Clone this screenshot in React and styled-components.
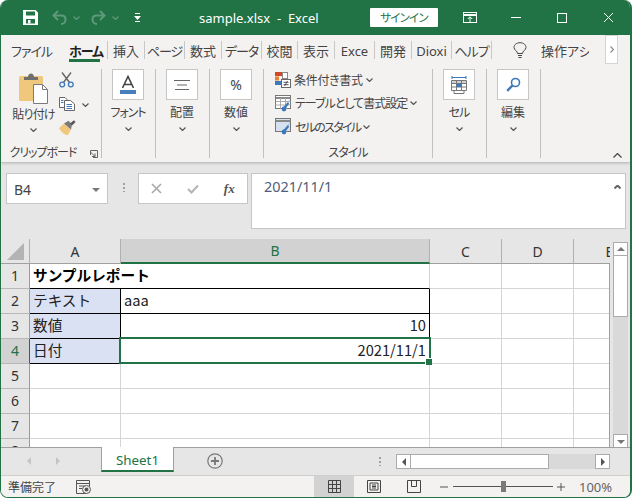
import React from "react";
import styled, { createGlobalStyle } from "styled-components";

const UI_FONT = `"Noto Sans", "Noto Sans CJK JP", sans-serif`;
const CELL_FONT = `"Noto Sans CJK JP", "Noto Sans", sans-serif`;
const GREEN = "#217346";

const tabs = [
  { label: "ファイル", w: 61, noSep: true, tight: 1 },
  { label: "ホーム", w: 45, active: true, tight: 1 },
  { label: "挿入", w: 36 },
  { label: "ページ", w: 39, tight: 1 },
  { label: "数式", w: 36 },
  { label: "データ", w: 39, tight: 1 },
  { label: "校閲", w: 35 },
  { label: "表示", w: 36 },
  { label: "Exce", w: 39 },
  { label: "開発", w: 36 },
  { label: "Dioxi", w: 39 },
  { label: "ヘルプ", w: 39, tight: 1 },
];

const rows = [
  [{ text: "サンプルレポート", bold: true, open: true, under: true }, { under: true }, {}, {}, {}],
  [{ text: "テキスト", fill: true, boxed: true }, { text: "aaa", boxed: true }, {}, {}, {}],
  [{ text: "数値", fill: true, boxed: true }, { text: "10", right: true, boxed: true }, {}, {}, {}],
  [{ text: "日付", fill: true, boxed: true }, { text: "2021/11/1", right: true, boxed: true }, {}, {}, {}],
  [{}, {}, {}, {}, {}],
  [{}, {}, {}, {}, {}],
  [{}, {}, {}, {}, {}],
  [{}, {}, {}, {}, {}],
];

const GlobalStyle = createGlobalStyle`
  html, body {
    margin: 0;
    background: #fff;
  }
  * {
    box-sizing: border-box;
  }
`;

const Window = styled.div`
  width: 632px;
  height: 498px;
  display: flex;
  flex-direction: column;
  overflow: hidden;
  background: #e6e6e6;
  border: 1px solid ${GREEN};
  border-width: 0 2px 1px 1px;
  border-radius: 8px;
  font-family: ${UI_FONT};
  font-feature-settings: "palt";
  color: #444;
`;

const TitleBar = styled.div`
  height: 35px;
  flex: none;
  margin: 0 -2px 0 -1px;
  padding-left: 23px;
  display: flex;
  align-items: center;
  background: ${GREEN};
  color: #fff;
`;

const QuickIcon = styled.span`
  display: flex;
  width: ${(p) => p.$w}px;
  justify-content: flex-start;
`;

const Title = styled.div`
  width: 171px;
  margin-left: 58px;
  font-size: 13px;
  white-space: pre;
`;

const SignIn = styled.div`
  width: 68px;
  height: 19px;
  margin-right: 9px;
  background: #fff;
  color: ${GREEN};
  font-size: 11.5px;
  letter-spacing: -0.8px;
  line-height: 19px;
  text-align: center;
  border-radius: 1px;
`;

const WinButton = styled.div`
  width: 46px;
  display: flex;
  justify-content: center;
`;

const TabRow = styled.div`
  height: 27px;
  flex: none;
  display: flex;
  position: relative;
  z-index: 2;
  background: #f3f2f1;
`;

const Tab = styled.div`
  width: ${(p) => p.$w}px;
  overflow: hidden;
  display: flex;
  justify-content: center;
  font-size: 13px;
  letter-spacing: ${(p) => (p.$tight ? "-1px" : "0")};
  font-weight: ${(p) => (p.$active ? 700 : 400)};
  color: ${(p) => (p.$active ? "#222" : "#444")};
  white-space: nowrap;
`;

const TabText = styled.span`
  height: 27px;
  width: ${(p) => (p.$active ? "31px" : "auto")};
  line-height: 32px;
  border-bottom: ${(p) => (p.$active ? `3px solid ${GREEN}` : "none")};
  text-align: center;
`;

const TabSep = styled.div`
  width: 1px;
  height: 18px;
  margin-top: 6px;
  background: #c8c8c8;
`;

const BulbSlot = styled.span`
  margin-left: 21px;
  padding-top: 7px;
  display: flex;
`;

const TellMe = styled.div`
  width: 48px;
  margin-left: 14px;
  overflow: hidden;
  white-space: nowrap;
  font-size: 13px;
  line-height: 32px;
`;

const TabScroll = styled.div`
  width: 13px;
  height: 29px;
  margin-left: 16px;
  background: #fff;
  border: 1px solid #d4d4d4;
  display: flex;
  align-items: center;
  justify-content: center;
`;

const Ribbon = styled.div`
  height: 100px;
  flex: none;
  padding-top: 7px;
  display: flex;
  position: relative;
  z-index: 1;
  background: #f3f2f1;
  box-shadow: 0 1px 3px rgba(0, 0, 0, 0.25);
`;

const Group = styled.div`
  width: ${(p) => p.$w}px;
  height: 89px;
  display: flex;
  flex-direction: column;
  align-items: ${(p) => (p.$collapsed ? "center" : "stretch")};
  border-right: 1px solid #c0c0c0;
  position: relative;
`;

const GroupBox = styled.div`
  width: 32px;
  height: 31px;
  margin-right: 1px;
  background: #fff;
  border: 1px solid #c6c6c6;
  display: flex;
  align-items: center;
  justify-content: center;
`;

const PercentGlyph = styled.span`
  font-size: 14px;
  color: #444;
`;

const GroupName = styled.div`
  margin: 4px 1px 0 0;
  font-size: 12px;
  letter-spacing: ${(p) => (p.$tight ? "-1px" : "0")};
  line-height: 18px;
  color: #444;
`;

const ChevronLine = styled.div`
  margin-top: ${(p) => p.$top ?? 5}px;
  margin-right: 1px;
  display: flex;
  justify-content: center;
`;

const ClipBody = styled.div`
  flex: 1;
  display: flex;
`;

const PasteColumn = styled.div`
  width: 58px;
  padding: 4px 0 0 7px;
  display: flex;
  flex-direction: column;
  align-items: center;
  font-size: 12px;
  letter-spacing: -0.8px;
  line-height: 16px;
  white-space: nowrap;
`;

const PasteLabel = styled.div`
  margin-top: 3px;
`;

const ToolColumn = styled.div`
  padding-top: 3px;
  display: flex;
  flex-direction: column;
`;

const Tool = styled.div`
  height: ${(p) => p.$h}px;
  display: flex;
  align-items: flex-start;
  gap: 7px;
`;

const ToolChevron = styled.span`
  padding-top: 6px;
  display: flex;
`;

const GroupFooter = styled.div`
  height: 16px;
  position: relative;
  font-size: 12px;
  letter-spacing: ${(p) => (p.$tight ? "-1px" : "0")};
  line-height: 22px;
  text-align: center;
  white-space: nowrap;
  color: #444;
`;

const FooterText = styled.span`
  display: block;
  padding-right: ${(p) => p.$pad ?? 0}px;
`;

const Launcher = styled.span`
  position: absolute;
  right: 3px;
  top: 8px;
  display: flex;
`;

const StyleRows = styled.div`
  flex: 1;
  margin-top: -1px;
  padding-left: 11px;
  display: flex;
  flex-direction: column;
`;

const StyleRow = styled.div`
  height: 23.5px;
  display: flex;
  align-items: center;
  gap: 3px;
  font-size: 12px;
  letter-spacing: ${(p) => p.$spacing ?? 0}px;
  white-space: nowrap;
`;

const CollapseRibbon = styled.span`
  position: absolute;
  right: 8px;
  bottom: 4px;
  display: flex;
`;

const FormulaBar = styled.div`
  height: 77px;
  flex: none;
  padding: 11px 0 0 5px;
  display: flex;
  align-items: flex-start;
  background: #e6e6e6;
`;

const NameBox = styled.div`
  width: 102px;
  height: 31px;
  padding: 2px 7px 0;
  display: flex;
  align-items: center;
  justify-content: space-between;
  background: #fff;
  border: 1px solid #c6c6c6;
  font-size: 14px;
  color: #444;
`;

const Grip = styled.div`
  width: 2px;
  height: 9px;
  margin: 10px 13px 0 15px;
  background: repeating-linear-gradient(#a0a0a0 0 2px, transparent 2px 4px);
`;

const FormulaButtons = styled.div`
  width: 110px;
  height: 31px;
  display: flex;
  align-items: center;
  justify-content: space-around;
  background: #fff;
  border: 1px solid #c6c6c6;
`;

const FxLabel = styled.span`
  font-family: "Liberation Serif", serif;
  font-size: 13px;
  font-style: italic;
  font-weight: 700;
  color: #555;
`;

const FormulaInput = styled.div`
  width: 375px;
  height: 56px;
  margin-left: 3px;
  padding: 1px 4px 0 12px;
  display: flex;
  align-items: flex-start;
  justify-content: space-between;
  background: #fff;
  border: 1px solid #c6c6c6;
  font-size: 14.4px;
  line-height: 24px;
  color: #4f5d78;
`;

const FormulaCollapse = styled.span`
  margin-top: 10px;
  display: flex;
`;

const SheetArea = styled.div`
  height: 208px;
  flex: none;
  display: flex;
  background: #e6e6e6;
`;

const GridPane = styled.div`
  width: 609px;
  position: relative;
  overflow: hidden;
  &::after {
    content: "";
    position: absolute;
    top: 24px;
    bottom: 0;
    right: 0;
    width: 1px;
    background: #a0a0a0;
  }
`;

const Grid = styled.div`
  width: 645px;
  display: grid;
  grid-template-columns: 29px 91px 309px 72px 72px 72px;
  grid-auto-rows: 25px;
  position: relative;
  background: #fff;
`;

const Corner = styled.div`
  background: #e6e6e6;
  border-right: 1px solid #b0b0b0;
  border-bottom: 1px solid #a0a0a0;
  display: flex;
  align-items: center;
  justify-content: center;
`;

const ColHead = styled.div`
  display: flex;
  align-items: center;
  justify-content: center;
  font-size: 14px;
  background: ${(p) => (p.$selected ? "#d2d2d2" : "#e6e6e6")};
  color: ${(p) => (p.$selected ? GREEN : "#333")};
  border-right: 1px solid #b0b0b0;
  border-bottom: ${(p) => (p.$selected ? `2px solid ${GREEN}` : "1px solid #a0a0a0")};
`;

const RowHead = styled.div`
  padding-bottom: 1px;
  display: flex;
  align-items: center;
  justify-content: center;
  font-size: 14px;
  background: ${(p) => (p.$selected ? "#d2d2d2" : "#e6e6e6")};
  color: ${(p) => (p.$selected ? GREEN : "#333")};
  border-right: 1px solid ${(p) => (p.$selected ? GREEN : "#9a9a9a")};
  border-bottom: 1px solid #b8b8b8;
`;

const Cell = styled.div`
  padding: 0 3px;
  position: ${(p) => (p.$open ? "relative" : "static")};
  z-index: ${(p) => (p.$open ? 1 : "auto")};
  font-family: ${CELL_FONT};
  font-feature-settings: normal;
  font-size: 14.67px;
  line-height: 22px;
  white-space: nowrap;
  font-weight: ${(p) => (p.$bold ? 700 : 400)};
  color: ${(p) => (p.$bold ? "#000" : "#222")};
  text-align: ${(p) => (p.$right ? "right" : "left")};
  background: ${(p) => (p.$fill ? "#d9e1f2" : "#fff")};
  border-right: ${(p) => (p.$open ? "none" : p.$boxed ? "1px solid #000" : "1px solid #d4d4d4")};
  border-bottom: 1px solid ${(p) => (p.$boxed || p.$under ? "#000" : "#d4d4d4")};
`;

const Selection = styled.div`
  position: absolute;
  z-index: 2;
  left: 118px;
  top: 98px;
  width: 312px;
  height: 27px;
  border: 2px solid ${GREEN};
  pointer-events: none;
  &::after {
    content: "";
    position: absolute;
    right: -3px;
    bottom: -3px;
    width: 6px;
    height: 6px;
    background: ${GREEN};
    border: 1px solid #fff;
    border-width: 1px 0 0 1px;
  }
`;

const VScroll = styled.div`
  width: 20px;
  padding: 3px 0 0 3px;
  display: flex;
  flex-direction: column;
`;

const ScrollBtn = styled.div`
  width: 15px;
  height: ${(p) => p.$h ?? 15}px;
  flex: none;
  background: #fff;
  border: 1px solid #ababab;
  display: flex;
  align-items: center;
  justify-content: center;
`;

const VTrack = styled.div`
  width: 15px;
  height: 178px;
  flex: none;
  background: #d9d9d9;
`;

const VThumb = styled.div`
  height: 61px;
  background: #fff;
  border: 1px solid #ababab;
  border-top: none;
`;

const SheetTabs = styled.div`
  height: 28px;
  flex: none;
  display: flex;
  align-items: flex-start;
  position: relative;
  background: #e6e6e6;
  border-top: 1px solid #a0a0a0;
`;

const TabNav = styled.div`
  width: 100px;
  height: 26px;
  padding-left: 25px;
  display: flex;
  align-items: center;
  gap: 23px;
`;

const SheetTab = styled.div`
  width: 73px;
  height: 25px;
  margin-top: -1px;
  background: #fff;
  border: 1px solid #a0a0a0;
  border-width: 0 1px;
  border-bottom: 2px solid ${GREEN};
  color: ${GREEN};
  font-size: 13.4px;
  line-height: 26px;
  text-align: center;
`;

const AddSheet = styled.div`
  width: 16px;
  height: 16px;
  margin: 5px 0 0 33px;
  display: flex;
`;

const TabGrip = styled(Grip)`
  margin: 9px 0 0 156px;
`;

const HScroll = styled.div`
  width: 214px;
  height: 15px;
  margin: 6px 0 0 15px;
  display: flex;
  background: #d9d9d9;
`;

const HThumb = styled.div`
  width: 138px;
  height: 15px;
  background: #fff;
  border: 1px solid #ababab;
  border-left: none;
`;

const HSpacer = styled.div`
  flex: 1;
`;

const StatusBar = styled.div`
  flex: 1;
  display: flex;
  align-items: center;
  padding-left: 7px;
  background: #f3f2f1;
  border-top: 1px solid #cfcfcf;
  font-size: 12px;
  color: #444;
`;

const StatusText = styled.span`
  width: 48px;
  white-space: nowrap;
`;

const MacroIcon = styled.span`
  margin-left: 20px;
  display: flex;
`;

const ViewButton = styled.div`
  width: 40px;
  height: 100%;
  display: flex;
  align-items: center;
  justify-content: center;
  background: ${(p) => (p.$active ? "#d2d2d2" : "transparent")};
  margin-left: ${(p) => (p.$first ? "auto" : 0)};
`;

const ZoomSlider = styled.div`
  width: 100px;
  height: 11px;
  margin: 0 4px 0 5px;
  display: flex;
  align-items: center;
  position: relative;
  &::before {
    content: "";
    width: 100%;
    height: 1px;
    background: #555;
  }
`;

const ZoomHandle = styled.span`
  position: absolute;
  left: 48px;
  top: 0;
  width: 5px;
  height: 11px;
  background: #7a7a7a;
`;

const ZoomText = styled.span`
  width: 65px;
  padding-left: 14px;
  font-size: 13px;
  color: #666;
`;

const ZoomSign = styled.span`
  display: flex;
  margin-left: ${(p) => p.$left ?? 0}px;
`;

function Chevron({ color = "#555", w = 7, dir = "down", weight = 1.2 }) {
  const h = Math.round(w * 0.6);
  const d = dir === "down" ? `M0.5 0.5 L${w / 2} ${h - 0.5} L${w - 0.5} 0.5` : `M0.5 ${h - 0.5} L${w / 2} 0.5 L${w - 0.5} ${h - 0.5}`;
  return (
    <svg width={w} height={h} viewBox={`0 0 ${w} ${h}`}>
      <path d={d} fill="none" stroke={color} strokeWidth={weight} />
    </svg>
  );
}

function ChevronRight() {
  return (
    <svg width="4" height="7" viewBox="0 0 4 7">
      <path d="M0.5 0.5L3.5 3.5L0.5 6.5" fill="none" stroke="#888" strokeWidth="1.2" />
    </svg>
  );
}

function Tri({ dir, color = "#777" }) {
  const pts = { up: "0,5 8,5 4,1", down: "0,1 8,1 4,5", left: "5,0 5,8 1,4", right: "1,0 1,8 5,4" }[dir];
  const wide = dir === "up" || dir === "down";
  return (
    <svg width={wide ? 8 : 6} height={wide ? 6 : 8} viewBox={wide ? "0 0 8 6" : "0 0 6 8"}>
      <polygon points={pts} fill={color} />
    </svg>
  );
}

function SaveIcon() {
  return (
    <svg width="15" height="15" viewBox="0 0 15 15">
      <path fillRule="evenodd" fill="#fff" d="M0 0H12.5L15 2.5V15H0ZM3 1.5V5.5H12V1.5ZM3 9V13.5H12V9Z" />
      <rect x="5" y="10" width="2.5" height="3.5" fill="#fff" />
    </svg>
  );
}

function UndoIcon({ flip }) {
  return (
    <svg width="15" height="15" viewBox="0 0 15 15" transform={flip ? "scale(-1 1)" : undefined}>
      <path d="M2 5.5H9.5C12 5.5 13.5 7.2 13.5 9.5S12 14 9 14" fill="none" stroke="#5c9a7b" strokeWidth="2" />
      <path d="M6 1L1.5 5.5L6 10" fill="none" stroke="#5c9a7b" strokeWidth="2" />
    </svg>
  );
}

function CustomizeIcon() {
  return (
    <svg width="7" height="9" viewBox="0 0 7 9">
      <rect x="1" y="0" width="5" height="1" fill="#fff" />
      <polygon points="0,3 7,3 3.5,7" fill="#fff" />
      <rect x="1" y="8" width="5" height="1" fill="#fff" />
    </svg>
  );
}

function DisplayIcon() {
  return (
    <svg width="14" height="12" viewBox="0 0 14 12">
      <rect x="0.5" y="0.5" width="13" height="10" fill="none" stroke="#fff" />
      <path d="M0.5 3H13.5" stroke="#fff" strokeWidth="2" />
      <path d="M7 10V5M4.8 7L7 4.8L9.2 7" fill="none" stroke="#fff" />
    </svg>
  );
}

function Bulb() {
  return (
    <svg width="14" height="17" viewBox="0 0 14 17">
      <path d="M4.5 11.5C4.5 9 1 8 1 5.5C1 2.8 3.5 0.7 7 0.7S13 2.8 13 5.5C13 8 9.5 9 9.5 11.5Z" fill="none" stroke="#444" />
      <path d="M5 13.5H9M5.5 15.5H8.5" stroke="#444" />
    </svg>
  );
}

function PasteIcon() {
  return (
    <svg width="29" height="31" viewBox="0 0 29 31">
      <rect x="0" y="3" width="24" height="25" rx="1.5" fill="#f0c87d" />
      <path d="M5 7V4H9C9 2 10.5 0.5 12 0.5S15 2 15 4H19V7Z" fill="#6e6e6e" />
      <path d="M14.5 11.5H23.5L28.5 16.5V30.5H14.5Z" fill="#fff" stroke="#7a7a7a" />
      <path d="M23.5 11.5V16.5H28.5" fill="none" stroke="#7a7a7a" />
    </svg>
  );
}

function ScissorsIcon() {
  return (
    <svg width="15" height="16" viewBox="0 0 15 16">
      <path d="M3 0.5L10.5 10.5M12 0.5L4.5 10.5" stroke="#666" strokeWidth="1.4" fill="none" />
      <circle cx="3.2" cy="12.5" r="2.4" fill="none" stroke="#3f78b8" strokeWidth="1.3" />
      <circle cx="11.8" cy="12.5" r="2.4" fill="none" stroke="#3f78b8" strokeWidth="1.3" />
    </svg>
  );
}

function CopyIcon() {
  return (
    <svg width="16" height="14" viewBox="0 0 16 14">
      <path d="M0.5 0.5H6L8 2.5V10.5H0.5Z" fill="#fff" stroke="#666" />
      <path d="M5.5 3.5H11.5L15.5 7V13.5H5.5Z" fill="#fff" stroke="#666" />
      <path d="M7.5 7.5H13M7.5 9.5H13M7.5 11.5H13M2 3.5H4.5M2 5.5H4.5" stroke="#3f78b8" />
    </svg>
  );
}

function BrushIcon() {
  return (
    <svg width="17" height="16" viewBox="0 0 17 16">
      <path d="M0 8L5 3.5L12 9.5L9 15C6 15.5 2 12 0 8Z" fill="#f0c87d" />
      <path d="M5 3.5L9.5 0.8L13 4.5L12 9.5Z" fill="#7a7a7a" />
      <path d="M11 3.5L15 0.3L16.5 2L13 5.5Z" fill="#555" />
    </svg>
  );
}

function LauncherIcon() {
  return (
    <svg width="8" height="8" viewBox="0 0 8 8">
      <path d="M0.5 5V0.5H7.5V7.5H3M0.5 2L5 6.5M5 3.5V6.5H2" fill="none" stroke="#666" />
    </svg>
  );
}

function FontIcon() {
  return (
    <svg width="18" height="20" viewBox="0 0 18 20">
      <path d="M3.5 13L9 1.5L14.5 13M5.3 9.5H12.7" fill="none" stroke="#444" strokeWidth="1.6" />
      <rect x="1" y="15" width="16" height="4" fill="#4a7ebb" />
    </svg>
  );
}

function AlignIcon() {
  return (
    <svg width="16" height="12" viewBox="0 0 16 12">
      <path d="M0 1.5H16M3 6H13M1 10.5H15" stroke="#666" />
    </svg>
  );
}

function CellsIcon() {
  return (
    <svg width="16" height="18" viewBox="0 0 16 18">
      <path d="M1 1.5H15M1 0V3M15 0V3" stroke="#3f78b8" />
      <path d="M0.5 4.5H15.5V14.5H0.5ZM0.5 7.5H15.5M0.5 11H15.5M5.5 4.5V14.5M10.5 4.5V14.5M3 14.5V17.5H13V14.5" fill="none" stroke="#777" />
      <rect x="5.5" y="7.5" width="5" height="3.5" fill="#3f78b8" />
      <rect x="0.5" y="4.5" width="15" height="3" fill="#777" opacity="0.35" />
    </svg>
  );
}

function SearchIcon() {
  return (
    <svg width="15" height="15" viewBox="0 0 15 15">
      <circle cx="9.5" cy="5.5" r="4" fill="none" stroke="#3f78b8" strokeWidth="1.6" />
      <path d="M6.5 8.5L1.2 13.8" stroke="#3f78b8" strokeWidth="2.4" />
    </svg>
  );
}

function CondFormatIcon() {
  return (
    <svg width="16" height="16" viewBox="0 0 16 16">
      <rect x="0" y="0" width="7" height="4" fill="#d24726" />
      <rect x="7.5" y="0.5" width="5" height="6" fill="#fff" stroke="#888" />
      <rect x="0" y="4.5" width="4" height="4" fill="#ed7d31" />
      <rect x="0" y="9" width="6" height="4" fill="#3f78b8" />
      <rect x="6.5" y="7.5" width="9" height="8" fill="#fff" stroke="#666" />
      <path d="M8.5 10.3H13.5M8.5 12.7H13.5M12.5 9L9.5 14" stroke="#444" strokeWidth="0.9" />
    </svg>
  );
}

function TableStyleIcon({ filled }) {
  return (
    <svg width="17" height="17" viewBox="0 0 17 17">
      <rect x="0.5" y="0.5" width="15" height="13" fill={filled ? "#d5e1ef" : "#fff"} stroke="#777" />
      <path d="M0.5 3H15.5" stroke="#888" strokeWidth="2" />
      {!filled && <path d="M5.5 3V13.5M10.5 3V13.5M0.5 6.5H15.5M0.5 10H15.5" stroke="#aaa" />}
      <path d="M15 4L9 12L11.5 14Z" fill="#9eb7d6" />
      <circle cx="9" cy="14" r="2.4" fill="#3f78b8" />
      <path d="M13.5 8L9 13" stroke="#3f78b8" strokeWidth="2" />
    </svg>
  );
}

function CrossIcon({ color = "#a8a8a8", size = 11, width = 1.6 }) {
  return (
    <svg width={size} height={size} viewBox="0 0 11 11">
      <path d="M1 1L10 10M10 1L1 10" stroke={color} strokeWidth={width} />
    </svg>
  );
}

function CheckIcon() {
  return (
    <svg width="12" height="10" viewBox="0 0 12 10">
      <path d="M1 5L4.5 8.5L11 1.5" fill="none" stroke="#b4b4b4" strokeWidth="2" />
    </svg>
  );
}

function CornerTriangle() {
  return (
    <svg width="17" height="17" viewBox="0 0 17 17">
      <polygon points="17,0 17,17 0,17" fill="#b4b4b4" />
    </svg>
  );
}

function AddIcon() {
  return (
    <svg width="16" height="16" viewBox="0 0 16 16">
      <circle cx="8" cy="8" r="7.2" fill="none" stroke="#777" strokeWidth="1.2" />
      <path d="M4 8H12M8 4V12" stroke="#777" strokeWidth="1.8" />
    </svg>
  );
}

function MacroGlyph() {
  return (
    <svg width="15" height="14" viewBox="0 0 15 14">
      <path d="M10 13.5H0.5V0.5H13.5V6" fill="none" stroke="#555" />
      <path d="M0.5 3.5H13.5M3 6H9M3 8.5H6" stroke="#555" />
      <circle cx="10.5" cy="9.5" r="4" fill="#f3f2f1" stroke="#555" />
      <circle cx="10.5" cy="9.5" r="2" fill="#555" />
    </svg>
  );
}

function NormalViewIcon() {
  return (
    <svg width="13" height="13" viewBox="0 0 13 13">
      <path d="M0.5 0.5H12.5V12.5H0.5ZM0.5 4.5H12.5M0.5 8.5H12.5M4.5 0.5V12.5M8.5 0.5V12.5" fill="none" stroke="#444" />
    </svg>
  );
}

function LayoutViewIcon() {
  return (
    <svg width="14" height="13" viewBox="0 0 14 13">
      <path d="M0.5 0.5H13.5V12.5H0.5ZM3 3H11V10H3ZM5 5H9M5 6.5H9M5 8H9" fill="none" stroke="#444" />
    </svg>
  );
}

function BreakViewIcon() {
  return (
    <svg width="14" height="13" viewBox="0 0 14 13">
      <path d="M0.5 0.5H13.5V12.5H0.5ZM4.5 0.5V6.5H9.5V0.5" fill="none" stroke="#444" />
    </svg>
  );
}

function ZoomSignIcon({ plus }) {
  return (
    <svg width="8" height="8" viewBox="0 0 8 8">
      <path d={plus ? "M0 4H8M4 0V8" : "M0 4H8"} stroke="#555" />
    </svg>
  );
}

export default function App() {
  return (
    <>
      <GlobalStyle />
      <Window>
        <TitleBar>
          <QuickIcon $w={29}><SaveIcon /></QuickIcon>
          <QuickIcon $w={21}><UndoIcon /></QuickIcon>
          <QuickIcon $w={18}><Chevron color="#5c9a7b" /></QuickIcon>
          <QuickIcon $w={21}><UndoIcon flip /></QuickIcon>
          <QuickIcon $w={22}><Chevron color="#5c9a7b" /></QuickIcon>
          <QuickIcon $w={7}><CustomizeIcon /></QuickIcon>
          <Title>{"sample.xlsx  -  Excel"}</Title>
          <SignIn>サインイン</SignIn>
          <WinButton><DisplayIcon /></WinButton>
          <WinButton>
            <svg width="10" height="1" viewBox="0 0 10 1"><rect width="10" height="1" fill="#fff" /></svg>
          </WinButton>
          <WinButton>
            <svg width="10" height="10" viewBox="0 0 10 10"><rect x="0.5" y="0.5" width="9" height="9" fill="none" stroke="#fff" /></svg>
          </WinButton>
          <WinButton><CrossIcon color="#fff" width={1} /></WinButton>
        </TitleBar>

        <TabRow>
          {tabs.map((t) => (
            <React.Fragment key={t.label}>
              <Tab $w={t.w} $active={t.active} $tight={t.tight}>
                <TabText $active={t.active}>{t.label}</TabText>
              </Tab>
              {!t.noSep && <TabSep />}
            </React.Fragment>
          ))}
          <BulbSlot><Bulb /></BulbSlot>
          <TellMe>操作アシ</TellMe>
          <TabScroll><ChevronRight /></TabScroll>
        </TabRow>

        <Ribbon>
          <Group $w={101}>
            <ClipBody>
              <PasteColumn>
                <PasteIcon />
                <PasteLabel>貼り付け</PasteLabel>
                <ChevronLine $top={5}><Chevron /></ChevronLine>
              </PasteColumn>
              <ToolColumn>
                <Tool $h={25}><ScissorsIcon /></Tool>
                <Tool $h={23}><CopyIcon /><ToolChevron><Chevron /></ToolChevron></Tool>
                <Tool $h={20}><BrushIcon /></Tool>
              </ToolColumn>
            </ClipBody>
            <GroupFooter $tight>
              <FooterText $pad={16}>クリップボード</FooterText>
              <Launcher><LauncherIcon /></Launcher>
            </GroupFooter>
          </Group>

          <Group $w={54} $collapsed>
            <GroupBox><FontIcon /></GroupBox>
            <GroupName $tight>フォント</GroupName>
            <ChevronLine><Chevron /></ChevronLine>
          </Group>
          <Group $w={54} $collapsed>
            <GroupBox><AlignIcon /></GroupBox>
            <GroupName>配置</GroupName>
            <ChevronLine><Chevron /></ChevronLine>
          </Group>
          <Group $w={54} $collapsed>
            <GroupBox><PercentGlyph>%</PercentGlyph></GroupBox>
            <GroupName>数値</GroupName>
            <ChevronLine><Chevron /></ChevronLine>
          </Group>

          <Group $w={169}>
            <StyleRows>
              <StyleRow $spacing={-0.3}><CondFormatIcon />条件付き書式 <Chevron /></StyleRow>
              <StyleRow $spacing={-1}><TableStyleIcon />テーブルとして書式設定 <Chevron /></StyleRow>
              <StyleRow $spacing={-1.7}><TableStyleIcon filled />セルのスタイル <Chevron /></StyleRow>
            </StyleRows>
            <GroupFooter $tight><FooterText>スタイル</FooterText></GroupFooter>
          </Group>

          <Group $w={54} $collapsed>
            <GroupBox><CellsIcon /></GroupBox>
            <GroupName $tight>セル</GroupName>
            <ChevronLine><Chevron /></ChevronLine>
          </Group>
          <Group $w={54} $collapsed>
            <GroupBox><SearchIcon /></GroupBox>
            <GroupName>編集</GroupName>
            <ChevronLine><Chevron /></ChevronLine>
          </Group>

          <CollapseRibbon><Chevron w={9} dir="up" color="#444" /></CollapseRibbon>
        </Ribbon>

        <FormulaBar>
          <NameBox>B4<Tri dir="down" /></NameBox>
          <Grip />
          <FormulaButtons>
            <CrossIcon />
            <CheckIcon />
            <FxLabel>fx</FxLabel>
          </FormulaButtons>
          <FormulaInput>
            2021/11/1
            <FormulaCollapse><Chevron w={7} dir="up" color="#666" weight={2} /></FormulaCollapse>
          </FormulaInput>
        </FormulaBar>

        <SheetArea>
          <GridPane>
            <Grid>
              <Corner><CornerTriangle /></Corner>
              <ColHead>A</ColHead>
              <ColHead $selected>B</ColHead>
              <ColHead>C</ColHead>
              <ColHead>D</ColHead>
              <ColHead>E</ColHead>
              {rows.map((row, i) => (
                <React.Fragment key={i}>
                  <RowHead $selected={i === 3}>{i + 1}</RowHead>
                  {row.map((c, j) => (
                    <Cell
                      key={j}
                      $bold={c.bold}
                      $open={c.open}
                      $under={c.under}
                      $fill={c.fill}
                      $boxed={c.boxed}
                      $right={c.right}
                    >
                      {c.text}
                    </Cell>
                  ))}
                </React.Fragment>
              ))}
              <Selection />
            </Grid>
          </GridPane>
          <VScroll>
            <ScrollBtn $h={14}><Tri dir="up" /></ScrollBtn>
            <VTrack><VThumb /></VTrack>
            <ScrollBtn><Tri dir="down" /></ScrollBtn>
          </VScroll>
        </SheetArea>

        <SheetTabs>
          <TabNav>
            <Tri dir="left" color="#c4c4c4" />
            <Tri dir="right" color="#c4c4c4" />
          </TabNav>
          <SheetTab>Sheet1</SheetTab>
          <AddSheet><AddIcon /></AddSheet>
          <TabGrip />
          <HScroll>
            <ScrollBtn><Tri dir="left" color="#555" /></ScrollBtn>
            <HThumb />
            <HSpacer />
            <ScrollBtn><Tri dir="right" color="#555" /></ScrollBtn>
          </HScroll>
        </SheetTabs>

        <StatusBar>
          <StatusText>準備完了</StatusText>
          <MacroIcon><MacroGlyph /></MacroIcon>
          <ViewButton $active $first><NormalViewIcon /></ViewButton>
          <ViewButton><LayoutViewIcon /></ViewButton>
          <ViewButton><BreakViewIcon /></ViewButton>
          <ZoomSign $left={6}><ZoomSignIcon /></ZoomSign>
          <ZoomSlider><ZoomHandle /></ZoomSlider>
          <ZoomSign><ZoomSignIcon plus /></ZoomSign>
          <ZoomText>100%</ZoomText>
        </StatusBar>
      </Window>
    </>
  );
}
